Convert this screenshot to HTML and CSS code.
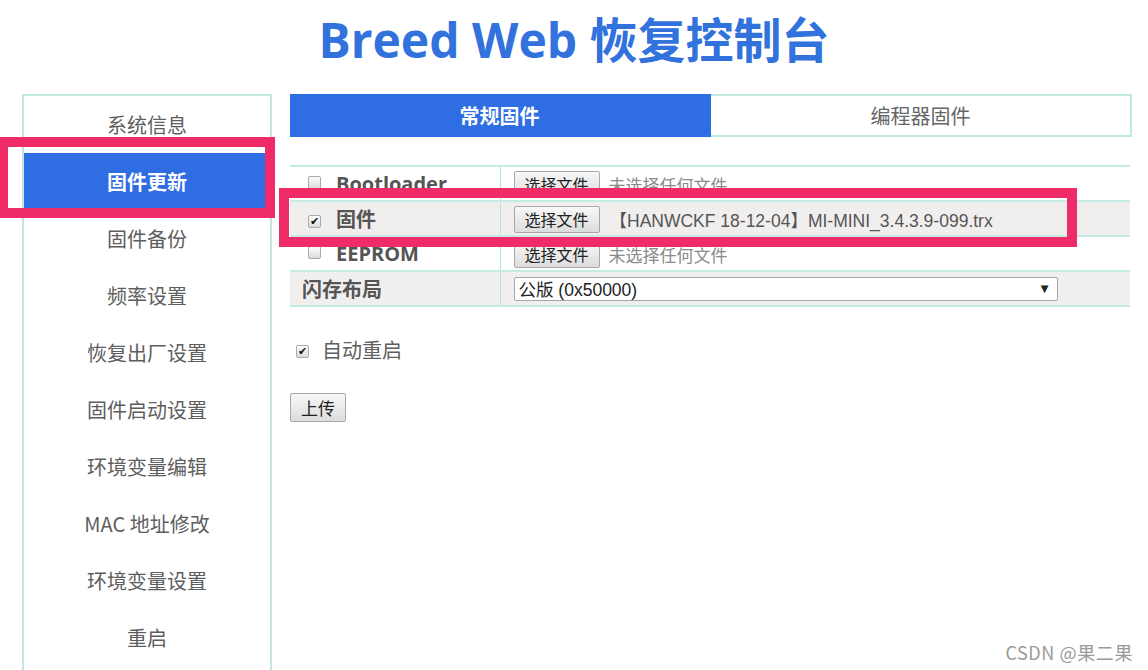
FILE: index.html
```html
<!DOCTYPE html>
<html lang="zh-CN">
<head>
    <meta charset="UTF-8">
    <meta name="viewport" content="width=device-width, initial-scale=1.0">
    <title>Breed Web 恢复控制台</title>
    <link rel="stylesheet" href="styles.css">
</head>
<body>

    <h1 class="titulo">Breed Web 恢复控制台</h1>

    <div class="layout">
        <!-- Menu lateral -->
        <nav class="sidebar">
            <a class="nav-item">系统信息</a>
            <a class="nav-item active">固件更新</a>
            <a class="nav-item">固件备份</a>
            <a class="nav-item">频率设置</a>
            <a class="nav-item">恢复出厂设置</a>
            <a class="nav-item">固件启动设置</a>
            <a class="nav-item">环境变量编辑</a>
            <a class="nav-item">MAC 地址修改</a>
            <a class="nav-item">环境变量设置</a>
            <a class="nav-item">重启</a>
        </nav>

        <main class="content">
            <div class="tabs">
                <div class="tab active">常规固件</div>
                <div class="tab">编程器固件</div>
            </div>

            <table class="flash-form">
                <tr>
                    <td class="label"><span class="chk"></span>Bootloader</td>
                    <td class="field"><button class="btn">选择文件</button><span class="file-name empty">未选择任何文件</span></td>
                </tr>
                <tr class="alt">
                    <td class="label"><span class="chk checked">✔</span>固件</td>
                    <td class="field"><button class="btn">选择文件</button><span class="file-name">【HANWCKF 18-12-04】MI-MINI_3.4.3.9-099.trx</span></td>
                </tr>
                <tr>
                    <td class="label"><span class="chk"></span>EEPROM</td>
                    <td class="field"><button class="btn">选择文件</button><span class="file-name empty">未选择任何文件</span></td>
                </tr>
                <tr class="alt layout-row">
                    <td class="label plain">闪存布局</td>
                    <td class="field">
                        <div class="select"><span>公版 (0x50000)</span><span class="arrow">▼</span></div>
                    </td>
                </tr>
            </table>

            <div class="auto-reboot"><span class="chk checked">✔</span>自动重启</div>

            <button class="btn upload">上传</button>
        </main>
    </div>

    <!-- Marcas rojas de la captura -->
    <div class="marca marca-menu"></div>
    <div class="marca marca-fila"></div>

    <div class="watermark">CSDN @果二果</div>

</body>
</html>
```

FILE: styles.css
```css
/* Estilos generales */
body {
    margin: 0;
    font-family: "Noto Sans CJK SC", sans-serif;
    background: #fff;
    color: #555;
    overflow: hidden;
}

.titulo {
    margin: 0 0 14px 0;
    height: 80px;
    line-height: 80px;
    text-align: center;
    font-family: "Open Sans", "Noto Sans CJK SC", sans-serif;
    font-size: 48px;
    font-weight: 700;
    color: #3172dc;
}

.layout {
    display: flex;
    align-items: flex-start;
    gap: 18px;
    padding-left: 22px;
}

/* Menu lateral */
.sidebar {
    width: 250px;
    box-sizing: border-box;
    border: 2px solid #bfe8e1;
    border-bottom: none;
    padding-bottom: 30px;
    display: flex;
    flex-direction: column;
}

.nav-item {
    height: 57px;
    line-height: 57px;
    text-align: center;
    font-size: 20px;
    color: #5e5e5e;
}

.nav-item.active {
    background: #2e6de2;
    color: #fff;
    font-weight: 700;
}

/* Contenido */
.content {
    width: 842px;
}

.tabs {
    display: flex;
    height: 43px;
}

.tab {
    flex: 1;
    box-sizing: border-box;
    text-align: center;
    font-size: 20px;
    color: #666;
    border: 2px solid #bfe8e1;
    border-left: none;
    line-height: 39px;
}

.tab.active {
    background: #2e6de2;
    border-color: #2e6de2;
    color: #fff;
    font-weight: 700;
}

.flash-form {
    margin-top: 28px;
    width: 840px;
    border-collapse: collapse;
    border-top: 2px solid #c4ebe4;
}

.flash-form tr {
    border-bottom: 2px solid #c4ebe4;
}

.flash-form tr.alt {
    background: #f1eeee;
}

.flash-form td {
    height: 33px;
    padding: 0;
}

.label {
    width: 210px;
    padding-left: 18px !important;
    box-sizing: border-box;
    font-family: "Open Sans", "Noto Sans CJK SC", sans-serif;
    font-size: 20px;
    font-weight: 700;
    color: #555;
    white-space: nowrap;
}

.label.plain {
    padding-left: 12px !important;
}

.field {
    border-left: 1px solid #b3e3db;
    padding-left: 13px !important;
    white-space: nowrap;
}

.chk {
    display: inline-block;
    width: 13px;
    height: 13px;
    box-sizing: border-box;
    border: 1px solid #a9a9a9;
    border-radius: 2px;
    background: linear-gradient(#fdfdfd, #dcdcdc);
    margin-right: 15px;
    vertical-align: 2px;
    font-size: 11px;
    font-weight: 700;
    line-height: 11px;
    text-align: center;
    color: #111;
    font-family: "DejaVu Sans", sans-serif;
}

.btn {
    font-family: "Noto Sans CJK SC", sans-serif;
    font-size: 16px;
    color: #222;
    height: 27px;
    padding: 0 10px;
    border: 1px solid #a8a8a8;
    border-radius: 2px;
    background: linear-gradient(#f8f8f8, #dcdcdc);
    vertical-align: middle;
    line-height: 25px;
}

.file-name {
    margin-left: 10px;
    font-family: "Liberation Sans", "Noto Sans CJK SC", sans-serif;
    font-size: 17.5px;
    color: #555;
    vertical-align: middle;
}

.file-name.empty {
    margin-left: 9px;
    font-family: "Noto Sans CJK SC", sans-serif;
    font-size: 17px;
    color: #8a8a8a;
}

.select {
    width: 544px;
    height: 24px;
    box-sizing: border-box;
    border: 1px solid #a6a6a6;
    border-radius: 2px;
    background: #fff;
    display: flex;
    justify-content: space-between;
    align-items: center;
    padding: 0 4px 0 4px;
    font-family: "Liberation Sans", "Noto Sans CJK SC", sans-serif;
    font-size: 17.5px;
    color: #222;
}

.select .arrow {
    font-size: 10px;
    font-family: "DejaVu Sans", sans-serif;
    margin-right: 4px;
}

.auto-reboot {
    margin-top: 30px;
    height: 26px;
    line-height: 26px;
    padding-left: 6px;
    font-size: 20px;
    color: #5e5e5e;
}

.auto-reboot .chk {
    margin-right: 13px;
    vertical-align: 3px;
}

.upload {
    margin-top: 30px;
    height: 29px;
    font-size: 17px;
    padding: 0 10px;
}

/* Marcas rojas */
.marca {
    position: absolute;
    box-sizing: border-box;
    border: 10px solid #ef2c68;
}

.marca-menu {
    left: -2px;
    top: 137px;
    width: 277px;
    height: 81px;
}

.marca-fila {
    left: 279px;
    top: 188px;
    width: 798px;
    height: 59px;
}

.watermark {
    position: absolute;
    right: 15px;
    top: 639px;
    font-size: 18px;
    letter-spacing: 0.6px;
    color: #9a9a9a;
}
```
